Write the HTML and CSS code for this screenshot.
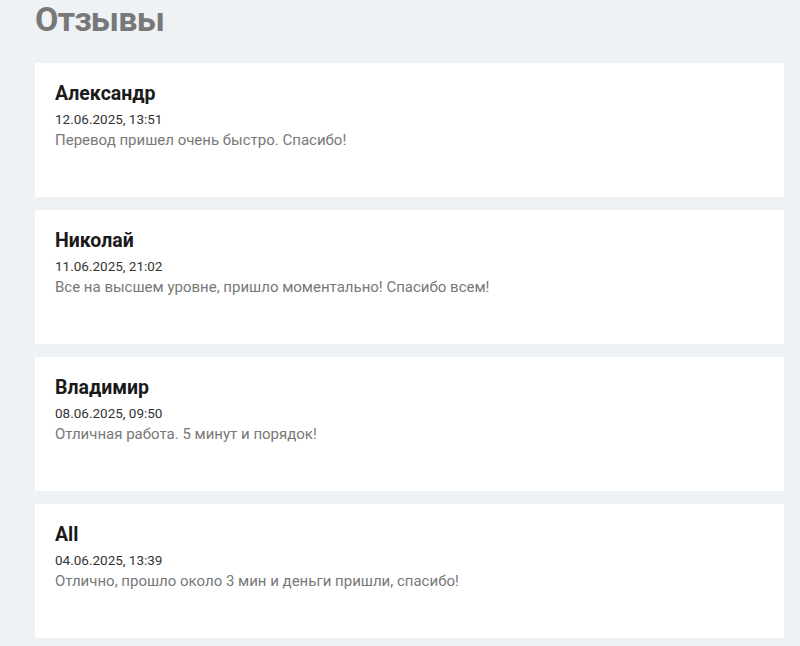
FILE: index.html
```html
<!DOCTYPE html>
<html lang="ru">
<head>
<meta charset="utf-8">
<link rel="stylesheet" href="styles.css">
</head>
<body>
<div class="page">
  <h1 class="title">Отзывы</h1>
  <div class="list">
    <div class="card">
      <div class="name">Александр</div>
      <div class="date">12.06.2025, 13:51</div>
      <div class="text">Перевод пришел очень быстро. Спасибо!</div>
    </div>
    <div class="card">
      <div class="name">Николай</div>
      <div class="date">11.06.2025, 21:02</div>
      <div class="text">Все на высшем уровне, пришло моментально! Спасибо всем!</div>
    </div>
    <div class="card">
      <div class="name">Владимир</div>
      <div class="date">08.06.2025, 09:50</div>
      <div class="text">Отличная работа. 5 минут и порядок!</div>
    </div>
    <div class="card">
      <div class="name">All</div>
      <div class="date">04.06.2025, 13:39</div>
      <div class="text">Отлично, прошло около 3 мин и деньги пришли, спасибо!</div>
    </div>
  </div>
</div>
</body>
</html>
```
FILE: styles.css
```css
html, body {
  margin: 0;
  padding: 0;
  background: #eef2f5;
}
body {
  font-family: "Roboto", "Liberation Sans", sans-serif;
}
.page {
  padding: 0 16px 0 35px;
}
.title {
  margin: 0;
  font-size: 34px;
  line-height: 39px;
  letter-spacing: -0.8px;
  font-weight: 700;
  color: #787878;
  height: 63px;
}
.list {
  display: flex;
  flex-direction: column;
  gap: 13px;
}
.card {
  background: #ffffff;
  height: 134px;
  box-sizing: border-box;
  padding: 19px 20px 0 20px;
}
.name {
  font-size: 19.5px;
  line-height: 24px;
  font-weight: 700;
  color: #1a1a1a;
}
.date {
  margin-top: 3px;
  font-size: 13.5px;
  line-height: 20px;
  color: #333333;
}
.text {
  font-size: 15px;
  line-height: 22px;
  color: #787878;
}
```
